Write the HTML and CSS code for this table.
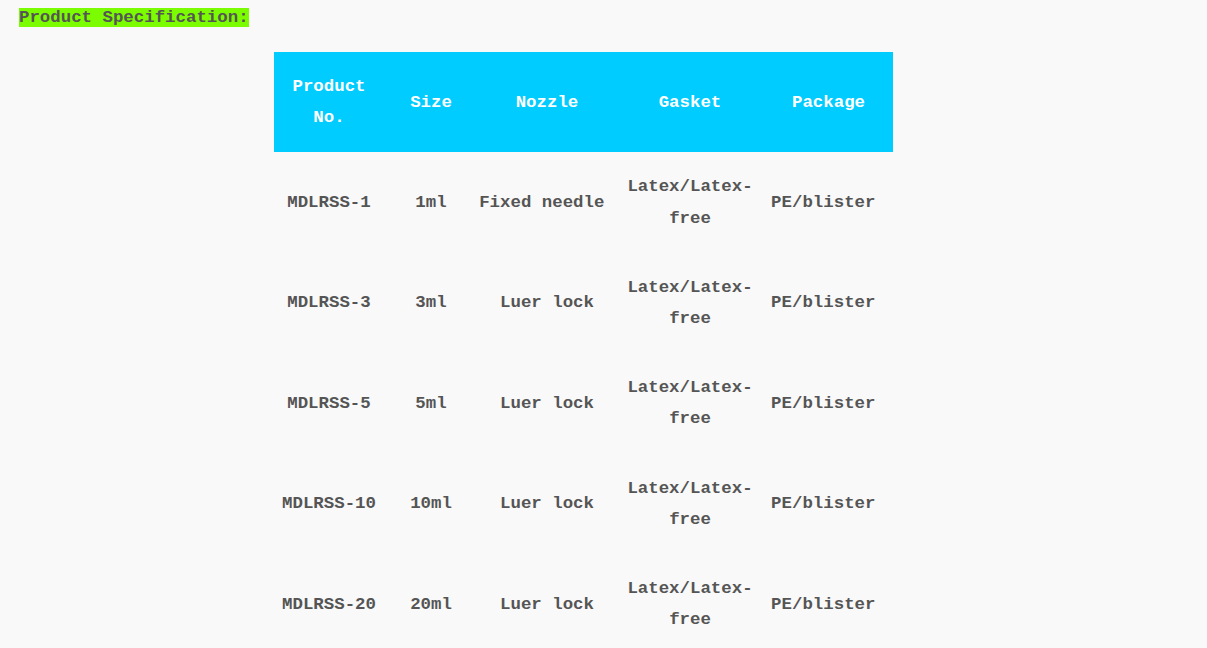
FILE: index.html
```html
<!DOCTYPE html>
<html lang="en">
<head>
  <meta charset="UTF-8">
  <title>Product Specification</title>
  <link rel="stylesheet" href="styles.css">
</head>
<body>
<div class="box">
  <p class="title"><span class="mark">Product Specification:</span></p>
  <table class="spec">
    <colgroup>
      <col class="c1">
      <col class="c2">
      <col class="c3">
      <col class="c4">
      <col class="c5">
    </colgroup>
    <thead>
      <tr>
        <th>Product No.</th>
        <th>Size</th>
        <th>Nozzle</th>
        <th>Gasket</th>
        <th>Package</th>
      </tr>
    </thead>
    <tbody>
      <tr>
        <td>MDLRSS-1</td>
        <td>1ml</td>
        <td class="nowrap">Fixed needle&nbsp;</td>
        <td>Latex/Latex-free</td>
        <td>PE/blister&nbsp;</td>
      </tr>
      <tr>
        <td>MDLRSS-3</td>
        <td>3ml</td>
        <td>Luer lock</td>
        <td>Latex/Latex-free</td>
        <td>PE/blister&nbsp;</td>
      </tr>
      <tr>
        <td>MDLRSS-5</td>
        <td>5ml</td>
        <td>Luer lock</td>
        <td>Latex/Latex-free</td>
        <td>PE/blister&nbsp;</td>
      </tr>
      <tr>
        <td>MDLRSS-10</td>
        <td>10ml</td>
        <td>Luer lock</td>
        <td>Latex/Latex-free</td>
        <td>PE/blister&nbsp;</td>
      </tr>
      <tr>
        <td>MDLRSS-20</td>
        <td>20ml</td>
        <td>Luer lock</td>
        <td>Latex/Latex-free</td>
        <td>PE/blister&nbsp;</td>
      </tr>
    </tbody>
  </table>
</div>
</body>
</html>
```

FILE: styles.css
```css
*{
  margin: 0;
  padding: 0;
}
html,body{
  width: 100%;
  background-color: #f9f9f9;
}
body{
  font-family: "Liberation Mono", "Courier New", monospace;
  font-size: 17.4px;
  font-weight: bold;
  color: #555555;
}
.box{
  padding: 8px 0 0 19px;
}
/*标题*/
.title{
  line-height: 20px;
}
.mark{
  background-color: #7cfc00;
}
/*规格表*/
.spec{
  width: 619px;
  margin: 24px 0 0 255px;
  border-collapse: collapse;
  table-layout: fixed;
}
.spec .c1{ width: 110px; }
.spec .c2{ width: 94px; }
.spec .c3{ width: 138px; }
.spec .c4{ width: 148px; }
.spec .c5{ width: 129px; }
.spec th,
.spec td{
  padding: 19px 1px;
  line-height: 31.2px;
  text-align: center;
  vertical-align: middle;
}
.spec .nowrap{
  white-space: nowrap;
}
.spec thead tr{
  background-color: #00ccff;
}
.spec th{
  color: #ffffff;
  font-weight: bold;
}
```
